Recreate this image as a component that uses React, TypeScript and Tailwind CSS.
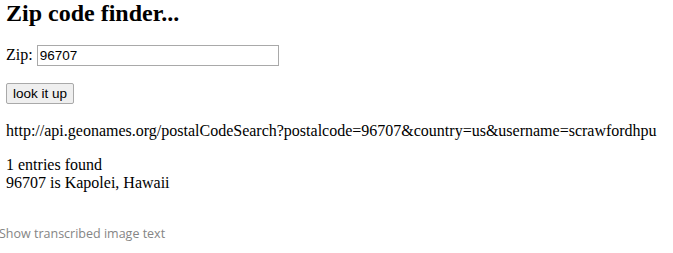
export default function App() {
  return (
    <div className="w-[673px] h-[253px] bg-white overflow-hidden text-black" style={{ fontFamily: '"Liberation Serif", "Times New Roman", serif' }}>
      <div className="pl-[6px]">
        <h1 className="text-[24px] font-bold leading-[27px]">Zip code finder...</h1>
        <div className="mt-[16px] flex items-center text-[16px]">
          <span>Zip:</span>
          <input
            defaultValue="96707"
            className="ml-[4px] w-[242px] h-[21px] border border-[#a9a9a9] px-[2px] text-[13.5px] outline-none"
            style={{ fontFamily: '"Liberation Sans", Arial, sans-serif' }}
          />
        </div>
        <button
          type="button"
          className="mt-[16px] h-[21px] w-[68px] border border-[#a9a9a9] rounded-[2px] bg-[#efefef] text-[13.5px] leading-none"
          style={{ fontFamily: '"Liberation Sans", Arial, sans-serif' }}
        >
          look it up
        </button>
        <p className="mt-[17px] text-[16px] leading-[18px]">
          http://api.geonames.org/postalCodeSearch?postalcode=96707&amp;country=us&amp;username=scrawfordhpu
        </p>
        <p className="mt-[16px] text-[16px] leading-[18px]">1 entries found</p>
        <p className="text-[16px] leading-[18px]">96707 is Kapolei, Hawaii</p>
      </div>
      <div
        className="mt-[33px] -ml-[1px] text-[12.5px] leading-[18px] text-[#858585]"
        style={{ fontFamily: '"Open Sans", "Noto Sans", sans-serif' }}
      >
        Show transcribed image text
      </div>
    </div>
  )
}
